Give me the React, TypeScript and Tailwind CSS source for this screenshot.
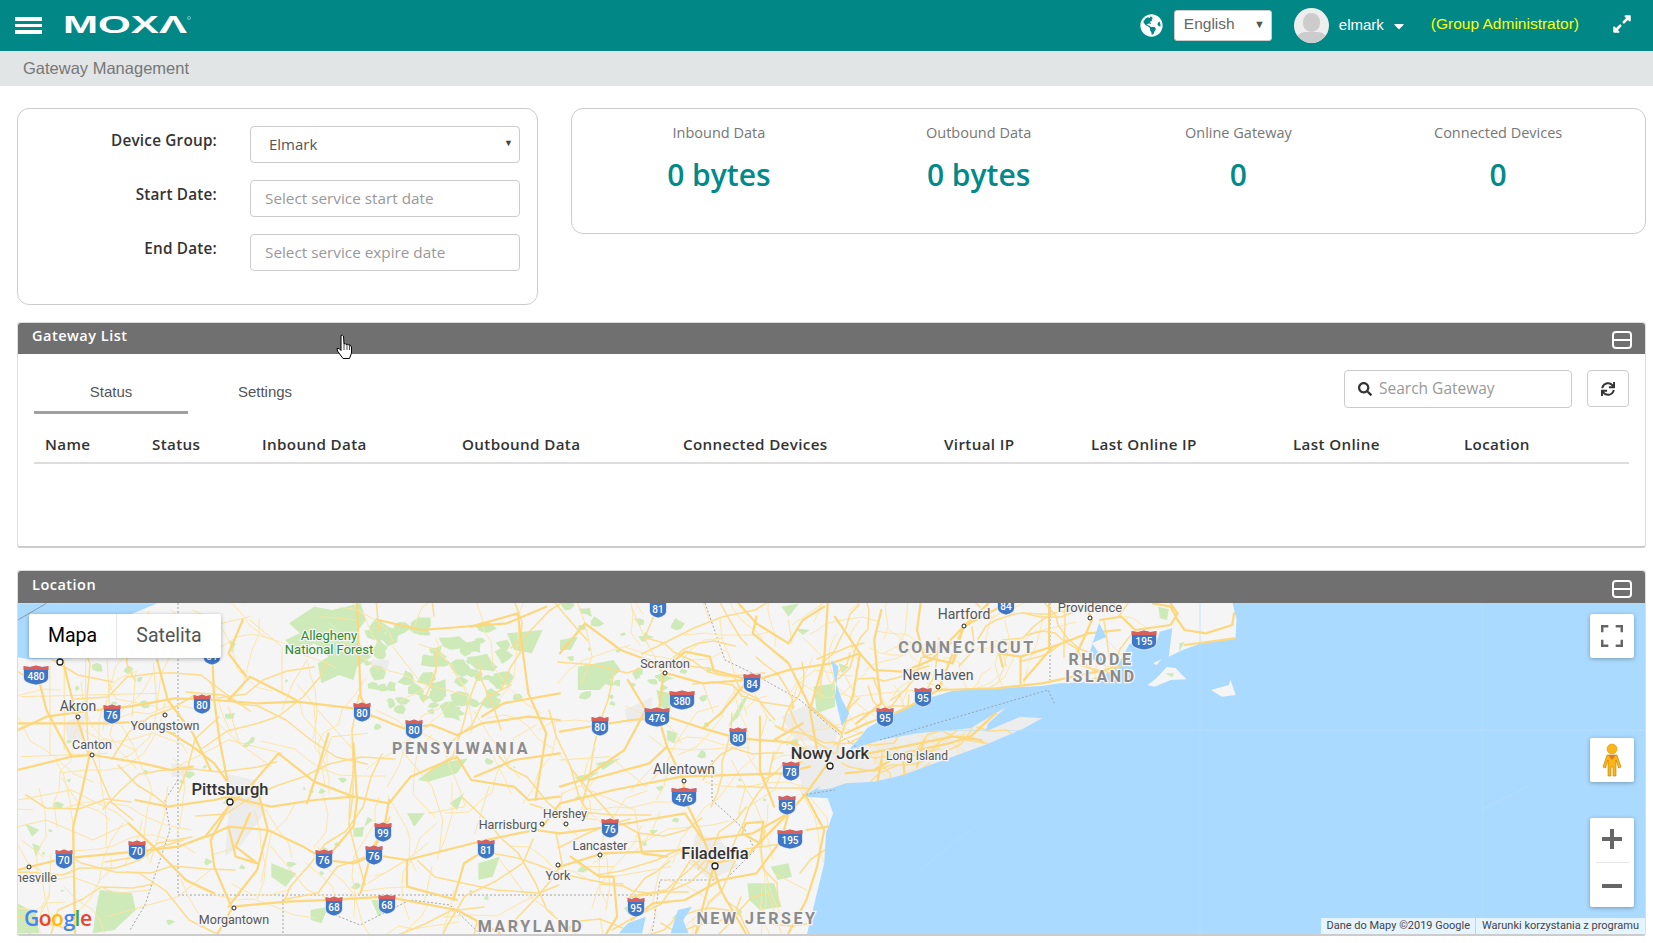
import React from 'react';
import { FaGlobeAmericas, FaExpandAlt, FaSearch, FaSync, FaCaretDown } from 'react-icons/fa';

const OPEN = "font-['Open_Sans',sans-serif]";
const ARIAL = "font-['Liberation_Sans',Arial,sans-serif]";

// --- Map data: road traces, per map region ---
const ROADS_WEST_MAIN = [
  'M50 390 L130 350 L230 335 L360 320 L490 295 L600 300 L720 310 L830 305 L990 325 L1050 350 L1130 385 L1210 375 L1280 405 L1350 370 L1480 350 L1568 360',
  'M50 370 L300 370 L400 365 L480 400 L540 440 L600 490 L640 550',
  'M50 810 L180 775 L380 755 L500 740 L575 710 L640 620 L700 560 L780 460 L880 545 L990 590 L1090 610 L1150 530 L1280 470 L1320 540 L1440 560 L1480 600 L1568 590',
  'M580 710 L640 680 L750 690 L850 740 L910 780 L990 790 L1050 765 L1140 780 L1250 750 L1360 720 L1500 690 L1568 700',
  'M595 170 L600 300 L615 420 L640 560 L645 610 L590 720 L600 800 L650 925 L610 1000',
  'M650 920 L800 905 L930 900 L1080 890 L1280 930 L1400 1000',
  'M1090 600 L1075 690 L1040 760 L1010 880',
  'M1270 900 L1300 790 L1360 750',
  'M210 1000 L205 680 L230 570 L250 470 L215 350 L180 200',
  'M50 510 L200 470 L260 465 L400 490 L480 510 L540 500',
  'M100 200 L130 330 L200 470',
  'M440 180 L470 300 L540 400 L590 510',
  'M380 600 L470 620 L600 600 L640 590 L760 620 L880 600 L990 590',
  'M360 670 L430 740 L520 840 L600 880',
  'M720 560 L750 690 L720 810 L640 920',
  'M990 430 L1000 600 L990 680 L910 780',
  'M920 400 L880 545 L860 610',
  'M1000 10 L1010 290 L1040 350',
  'M1320 80 L1450 40 L1480 280 L1530 400 L1500 600',
  'M1060 60 L1180 90 L1420 70 L1530 20',
  'M1350 350 L1410 310 L1568 280',
  'M1568 460 L1440 480 L1330 530',
  'M1140 780 L1140 860 L1280 900',
  'M640 300 L700 230 L830 300',
  'M690 230 L640 160 L680 60',
  'M700 640 L660 740 L720 790 L660 770 L640 680',
  'M1568 610 L1520 680',
];
const ROADS_WEST_THIN = [
  'M60 470 L300 460 M60 290 L440 280 M140 200 L140 470 M180 180 L180 450 M240 180 L240 360 M300 180 L310 370 M380 220 L370 350 M430 190 L440 330',
  'M50 600 L200 570 L330 640 L360 670 L260 720 L130 660 L50 680',
  'M480 510 L640 420 L790 460 M640 320 L670 430 L760 500 M670 430 L600 360',
  'M790 330 L820 250 L860 180 M890 330 L990 450 M1030 400 L930 410 L890 520',
  'M1100 420 L1210 560 L1240 660 L1230 760 M1200 640 L1300 620 M1370 560 L1330 700',
  'M760 740 L860 870 L910 890 M600 800 L500 890 L300 950 M100 850 L200 830 L330 880 L420 870',
  'M1030 850 L1140 780 M1210 800 L1190 900 M1400 780 L1470 880 L1550 940',
  'M700 60 L790 140 L790 280 M540 30 L620 70 L700 50 M1000 60 L900 50 M1100 140 L1180 250 L1320 290',
  'M60 720 L120 770 M420 790 L460 650 L470 560',
];
const ROADS_EAST_MAIN = [
  'M0 395 L110 375 L200 360 L300 350 L400 385 L500 415 L620 425 L660 430 L720 470',
  'M400 385 L450 340 L520 250 L640 210 L760 190 L840 160 L880 210 L960 215 L1040 180 L1130 80 L1200 40 L1250 10',
  'M290 220 L275 350 L300 440 L345 540 L350 600 L395 700 L430 790',
  'M0 610 L150 570 L340 530 L620 520 L700 500',
  'M0 700 L140 680 L240 660 L350 640 L400 720 L540 700 L640 640',
  'M0 800 L120 760 L350 750 L430 790 L520 770 L640 640 L690 580 L750 490',
  'M800 400 L860 370 L960 330 L1060 270 L1220 265 L1350 250 L1568 200',
  'M800 520 L880 510 L960 460 L1090 430 L1150 410 L1220 340',
  'M820 470 L960 440 L1100 410 L1180 420',
  'M690 590 L740 690 L720 800 L690 900 L640 1000',
  'M640 640 L620 720 L550 820 L450 840 L350 900 L260 910 L200 960',
  'M430 800 L450 870 L520 1000 M430 800 L380 1000',
  'M750 10 L740 180 L700 330 L720 450 M790 360 L820 290 L840 160 L770 50',
  'M550 50 L540 100 L640 190 L700 320 L790 400 M500 10 L550 70 L640 130 L680 60 L740 20',
  'M1010 10 L1000 90 L1020 170 L1100 190 L1130 80 M900 30 L880 120 L890 230 L900 310 L830 370',
  'M1380 140 L1300 240 M1568 90 L1480 100 L1380 140 L1290 170 L1230 160 L1240 200',
  'M0 160 L70 70 L170 150 L220 170 L300 200 L350 155 L420 170 L430 210 L530 240',
  'M190 240 L240 330 L180 450 L60 540 L0 560 M300 220 L400 250 L520 240 M300 440 L250 490 L80 540',
  'M220 700 L230 760 L300 770 M30 770 L110 830 L150 830 L160 950 L130 1000',
  'M560 350 L560 510 L600 620 M600 420 L680 370 M900 480 L890 540 M960 460 L965 525 M1020 420 L1000 500',
  'M520 670 L570 665 L560 730 L510 700 Z M690 690 L750 680',
  'M1200 10 L1130 80 L1060 270 M1470 10 L1490 60 L1440 180',
  'M1290 170 L1290 250 M1370 10 L1370 140',
];
const ROADS_EAST_THIN = [
  'M50 10 L70 70 L90 170 L60 250 M200 20 L240 120 L290 220 M0 480 L140 470 L240 560 L290 500',
  'M60 560 L210 630 L220 700 M400 250 L430 340 M540 270 L580 350 L560 420 M620 520 L600 570 L500 640',
  'M30 770 L60 800 L150 800 M150 830 L310 800 M600 820 L690 870 M450 880 L350 980 M580 870 L620 1000',
  'M640 60 L650 130 M800 230 L830 290 M950 120 L1000 130 M1120 150 L1100 190 M1240 150 L1250 200',
  'M0 640 L100 660 M200 570 L260 500 M480 480 L520 560 L500 640',
];
const LAND = 'M-1568 0 L1882 0 L1895 60 L1892 115 L1808 125 L1744 150 L1705 170 L1715 85 L1680 95 L1670 130 L1635 150 L1596 130 L1560 200 L1500 245 L1400 250 L1350 258 L1220 265 L1100 272 L1040 292 L950 330 L860 385 L830 425 L790 470 L760 520 L700 565 L680 590 L750 595 L765 640 L745 700 L740 790 L715 900 L690 1010 L-1568 1010 Z';
const LONG_ISLAND = 'M810 450 L900 420 L1000 400 L1150 385 L1220 340 L1250 322 L1200 370 L1190 395 L1290 350 L1350 355 L1300 385 L1190 435 L1100 470 L960 525 L880 545 L800 550 L760 565 L720 570 L770 510 Z';

const FOREST_WEST = [
  'M880 20 L930 30 L1010 10 L1025 60 L990 110 L1040 170 L1000 200 L990 240 L950 225 L900 250 L890 190 L920 170 L880 130 L830 160 L800 120 L840 100 L810 70 Z',
  'M1170 540 L1230 490 L1310 475 L1280 520 L1200 545 Z',
  'M1420 100 L1520 90 L1490 160 L1440 150 Z',
  'M280 870 L370 880 L380 930 L320 990 L260 1000 L270 920 Z',
  'M760 790 L830 820 L800 860 L760 830 Z M90 730 L115 740 L100 770 Z M70 670 L110 690 L90 710 Z',
  'M990 685 L1020 680 L1015 710 L990 710 Z M1030 650 L1045 660 L1020 680 Z M1260 610 L1300 580 L1280 630 Z',
  'M50 910 L100 940 L110 1000 L50 1000 Z M870 930 L920 920 L900 970 L870 960 Z M1040 900 L1100 900 L1060 950 Z',
  'M1340 790 L1400 770 L1380 830 L1340 840 Z M1140 640 L1190 640 L1160 680 Z M640 120 L660 130 L650 160 Z',
];
const FOREST_EAST = [
  'M0 120 L50 110 L30 150 L0 150 Z M50 200 L150 180 L170 210 L110 270 L50 270 Z',
  'M270 270 L310 280 L310 330 L280 320 Z M300 390 L330 400 L320 430 L300 420 Z',
  'M710 260 L770 250 L770 320 L720 340 Z M660 85 L700 90 L680 105 Z M620 20 L670 10 L640 50 Z',
  'M525 850 L600 850 L620 920 L560 930 L530 900 Z M590 800 L640 790 L650 830 L610 840 Z',
  'M250 690 L275 690 L260 705 Z M780 190 L810 200 L790 220 Z M510 300 L530 280 L500 350 L470 380 Z',
  'M100 490 L170 475 L120 510 Z M40 530 L110 515 L60 550 Z',
];
const URBAN_EAST = [
  'M620 350 L700 310 L780 380 L770 430 L660 420 Z',
  'M380 700 L450 720 L500 800 L420 840 L360 790 Z',
  'M660 440 L800 430 L790 520 L680 590 Z',
  'M180 330 L260 290 L250 360 L190 370 Z',
];
const URBAN_WEST = [
  'M630 520 L710 540 L740 640 L680 730 L630 770 L640 640 Z',
  'M180 370 L240 340 L230 420 L190 420 Z M480 490 L540 500 L530 530 L480 530 Z M1040 180 L1090 180 L1085 210 L1040 215 Z',
];

// small seeded generator so the fine road mesh and the forest speckle stay put between renders
function seeded(seed: number) {
  let a = seed;
  return () => {
    a = (a + 0x6d2b79f5) | 0;
    let t = Math.imul(a ^ (a >>> 15), 1 | a);
    t = (t + Math.imul(t ^ (t >>> 7), 61 | t)) ^ t;
    return ((t ^ (t >>> 14)) >>> 0) / 4294967296;
  };
}

function walks(seed: number, count: number, box: [number, number, number, number], step: number) {
  const r = seeded(seed);
  const out: string[] = [];
  for (let i = 0; i < count; i++) {
    let x = box[0] + r() * (box[2] - box[0]);
    let y = box[1] + r() * (box[3] - box[1]);
    let dir = r() * Math.PI * 2;
    let d = `M${x.toFixed(0)} ${y.toFixed(0)}`;
    const n = 3 + Math.floor(r() * 5);
    for (let j = 0; j < n; j++) {
      dir += (r() - 0.5) * 1.1;
      x += Math.cos(dir) * step * (0.6 + r());
      y += Math.sin(dir) * step * (0.6 + r());
      d += ` L${x.toFixed(0)} ${y.toFixed(0)}`;
    }
    out.push(d);
  }
  return out;
}

function blobs(seed: number, count: number, box: [number, number, number, number], rMin: number, rMax: number) {
  const r = seeded(seed);
  const out: string[] = [];
  for (let i = 0; i < count; i++) {
    const cx = box[0] + r() * (box[2] - box[0]);
    const cy = box[1] + r() * (box[3] - box[1]);
    const rad = rMin + r() * (rMax - rMin);
    let d = '';
    for (let k = 0; k < 7; k++) {
      const a = (k / 7) * Math.PI * 2;
      const q = rad * (0.45 + r() * 0.8);
      d += `${k ? 'L' : 'M'}${(cx + Math.cos(a) * q).toFixed(1)} ${(cy + Math.sin(a) * q * 0.8).toFixed(1)} `;
    }
    out.push(d + 'Z');
  }
  return out;
}

const MESH_THIN = [
  ...walks(11, 150, [18, 603, 1000, 934], 17),
  ...walks(12, 45, [760, 610, 1170, 760], 9),
];
const MESH_MID = [
  ...walks(21, 55, [18, 615, 800, 934], 24),
  ...walks(22, 34, [730, 640, 960, 800], 14),
  ...walks(23, 14, [960, 603, 1175, 665], 14),
  ...walks(24, 10, [860, 725, 1020, 775], 12),
  ...walks(25, 10, [650, 820, 800, 934], 18),
];
const SPECKLE = [
  ...blobs(31, 60, [375, 625, 505, 715], 4, 13),
  ...blobs(32, 80, [18, 640, 800, 934], 1.5, 6),
  ...blobs(33, 24, [560, 603, 700, 700], 2, 8),
];

type Label = { t: string; x: number; y: number; s?: number; c?: string; w?: number; ls?: number };
const LABELS: Label[] = [
  { t: 'Akron', x: 78, y: 711, s: 14 },
  { t: 'Youngstown', x: 165, y: 730, s: 12.5 },
  { t: 'Canton', x: 92, y: 749, s: 12.5 },
  { t: 'Pittsburgh', x: 230, y: 795, s: 16.5, c: '#333', w: 500 },
  { t: 'Allegheny', x: 329, y: 640, s: 13, c: '#2b8a2b' },
  { t: 'National Forest', x: 329, y: 654, s: 13, c: '#2b8a2b' },
  { t: 'Morgantown', x: 234, y: 924, s: 12.5 },
  { t: 'nesville', x: 36, y: 882, s: 12.5 },
  { t: 'Harrisburg', x: 508, y: 829, s: 12.5 },
  { t: 'PENSYLWANIA', x: 461, y: 754, s: 16, c: '#8b8b8b', w: 700, ls: 2.6 },
  { t: 'MARYLAND', x: 531, y: 932, s: 16, c: '#8b8b8b', w: 700, ls: 2.6 },
  { t: 'Scranton', x: 665, y: 668, s: 12.5 },
  { t: 'Hartford', x: 964, y: 619, s: 14 },
  { t: 'CONNECTICUT', x: 967, y: 653, s: 16, c: '#8b8b8b', w: 700, ls: 2.6 },
  { t: 'New Haven', x: 938, y: 680, s: 14 },
  { t: 'Providence', x: 1090, y: 612, s: 13 },
  { t: 'RHODE', x: 1101, y: 665, s: 16, c: '#8b8b8b', w: 700, ls: 2.6 },
  { t: 'ISLAND', x: 1101, y: 682, s: 16, c: '#8b8b8b', w: 700, ls: 2.6 },
  { t: 'Long Island', x: 917, y: 760, s: 12 },
  { t: 'Nowy Jork', x: 830, y: 759, s: 16.5, c: '#333', w: 500 },
  { t: 'Allentown', x: 684, y: 774, s: 14 },
  { t: 'Hershey', x: 565, y: 818, s: 12 },
  { t: 'Lancaster', x: 600, y: 850, s: 12.5 },
  { t: 'York', x: 558, y: 880, s: 12.5 },
  { t: 'Filadelfia', x: 715, y: 859, s: 16.5, c: '#333', w: 500 },
  { t: 'NEW JERSEY', x: 757, y: 924, s: 16, c: '#8b8b8b', w: 700, ls: 2.6 },
];
// [x, y, large]
const DOTS: [number, number, boolean][] = [
  [60, 662, true], [78, 717, false], [165, 715, false], [92, 755, false], [230, 802, true], [234, 908, false],
  [29, 867, false], [542, 824, false], [665, 673, false], [964, 626, false], [938, 687, false], [1090, 618, false],
  [830, 766, true], [684, 781, false], [600, 855, false], [715, 866, true], [566, 824, false], [558, 865, false],
];
// [x, y, number]
const SHIELDS: [number, number, string][] = [
  [36, 675, '480'], [112, 714, '76'], [202, 704, '80'], [362, 712, '80'], [414, 729, '80'], [64, 859, '70'], [137, 850, '70'],
  [324, 859, '76'], [374, 855, '76'], [383, 832, '99'], [486, 849, '81'], [334, 906, '68'], [387, 904, '68'], [212, 655, '81'],
  [658, 608, '81'], [1006, 605, '84'], [752, 683, '84'], [682, 700, '380'], [657, 717, '476'], [600, 726, '80'], [738, 737, '80'],
  [923, 697, '95'], [885, 717, '95'], [791, 771, '78'], [684, 797, '476'], [787, 805, '95'], [610, 828, '76'], [790, 839, '195'],
  [636, 907, '95'], [1144, 640, '195'],
];

function Shield({ x, y, n }: { x: number; y: number; n: string }) {
  const w = n.length > 2 ? 12.5 : 8.5;
  return (
    <g transform={`translate(${x} ${y})`}>
      <path d={`M${-w} -9 L${-w * 0.5} -8 L0 -9.5 L${w * 0.5} -8 L${w} -9 L${w} 3 Q${w} 8 0 10 Q${-w} 8 ${-w} 3 Z`} fill="#3f76c6" stroke="#fff" strokeWidth="0.6" />
      <path d={`M${-w} -9 L${-w * 0.5} -8 L0 -9.5 L${w * 0.5} -8 L${w} -9 L${w} -5 L${-w} -5 Z`} fill="#d9605a" />
      <text x="0" y="4.5" textAnchor="middle" fontSize="10" fontWeight="500" fill="#fff" fontFamily="Roboto, sans-serif">{n}</text>
    </g>
  );
}

function MapDrawing() {
  return (
    <svg className="block w-full h-full" viewBox="18 603 1627 331" preserveAspectRatio="none">
      <defs>
        <clipPath id="land-clip">
          <path transform="translate(560 600) scale(.357 .3333)" d={LAND} />
          <path transform="translate(560 600) scale(.357 .3333)" d={LONG_ISLAND} />
        </clipPath>
      </defs>
      <rect x="18" y="603" width="1627" height="331" fill="#aadaff" />
      <g transform="translate(560 600) scale(.357 .3333)">
        <path d={LAND} fill="#f5f5f5" />
        <path d={LONG_ISLAND} fill="#ededed" />
        {URBAN_EAST.map((d) => <path key={d} d={d} fill="#ececec" />)}
        {FOREST_EAST.map((d) => <path key={d} d={d} fill="#cdeab8" />)}
      </g>
      <g transform="translate(1100 600) scale(.3527 .3333)">
        <path d="M135 255 L160 235 L190 200 L215 205 L245 238 L200 240 L155 260 Z M315 270 L365 255 L370 240 L385 285 L345 290 Z" fill="#f5f5f5" />
        <path d="M150 190 L175 178 L160 195 Z" fill="#f5f5f5" />
        <path d="M165 20 L195 28 L190 60 L170 55 Z M225 130 L240 125 L225 155 Z M185 220 L210 220 L205 232 Z" fill="#cdeab8" />
      </g>
      <g transform="translate(0 600) scale(.357 .3333)">
        {URBAN_WEST.map((d) => <path key={d} d={d} fill="#ececec" />)}
        {FOREST_WEST.map((d) => <path key={d} d={d} fill="#cdeab8" />)}
      </g>
      <g fill="#cdeab8">
        {SPECKLE.map((d) => <path key={d} d={d} />)}
      </g>
      {/* tile seams on the water */}
      <path d="M920 730.5 H1645 M1200 603 V934 M1482 603 V934 M1482 810 L1530 785 M920 870 L970 830" stroke="#b8e0ff" strokeWidth="0.7" fill="none" />

      {/* borders */}
      <g fill="none" stroke="#9a9a9a" strokeWidth="0.9" strokeDasharray="2 2">
        <path d="M178 603 V895 H655 M283 895 V934 M1050 603 V680 M880 740 L1048 690 L1055 705 M802 795 L835 790" />
        <path d="M705 603 L725 660 L750 672 L800 700 L840 735 L860 750 M712 760 L712 800 L745 830 L755 850 L725 880 L660 880 L652 934 M178 780 L165 800 L170 830 L145 905 L130 930" />
        <path d="M335 915 L360 925 L410 900 L450 905 L480 934" />
      </g>

      {/* roads */}
      <g fill="none" strokeLinejoin="round" strokeLinecap="round">
        <g clipPath="url(#land-clip)">
          <g stroke="#fde6a8" strokeWidth="1">
            {MESH_THIN.map((d) => <path key={d} d={d} />)}
          </g>
          <g stroke="#fddc8c" strokeWidth="1.5">
            {MESH_MID.map((d) => <path key={d} d={d} />)}
          </g>
        </g>
        <g transform="translate(0 600) scale(.357 .3333)" stroke="#fde3a0">
          {ROADS_WEST_THIN.map((d) => <path key={d} d={d} strokeWidth="1" vectorEffect="non-scaling-stroke" />)}
        </g>
        <g transform="translate(560 600) scale(.357 .3333)" stroke="#fde3a0">
          {ROADS_EAST_THIN.map((d) => <path key={d} d={d} strokeWidth="1" vectorEffect="non-scaling-stroke" />)}
        </g>
        <g transform="translate(0 600) scale(.357 .3333)" stroke="#fdd77c">
          {ROADS_WEST_MAIN.map((d) => <path key={d} d={d} strokeWidth="2.2" vectorEffect="non-scaling-stroke" />)}
        </g>
        <g transform="translate(560 600) scale(.357 .3333)" stroke="#fdd77c">
          {ROADS_EAST_MAIN.map((d) => <path key={d} d={d} strokeWidth="2.2" vectorEffect="non-scaling-stroke" />)}
        </g>
        <g transform="translate(1100 600) scale(.3527 .3333)" stroke="#fdd77c">
          <path d="M0 60 L60 50 L100 90 L200 75 L220 40 L200 10 M150 10 L200 20 L220 60 L240 90 L300 100 L375 75 L380 40 M240 135 L380 115" strokeWidth="2.2" vectorEffect="non-scaling-stroke" />
        </g>
      </g>

      {/* water over the road mesh: lake and bays */}
      <g transform="translate(0 600) scale(.357 .3333)">
        <path d="M50 10 L440 10 L330 60 L250 120 L200 175 L80 178 L50 172 Z" fill="#aadaff" />
        <path d="M50 60 L130 10" stroke="#8f9aa6" strokeWidth="1" fill="none" vectorEffect="non-scaling-stroke" />
      </g>
      <g transform="translate(560 600) scale(.357 .3333)">
        <path d="M310 1000 L330 930 L370 920 L345 960 L360 1000 Z M165 1000 L190 970 L240 950 L230 1000 Z" fill="#aadaff" />
        <path d="M1510 70 L1530 110 L1490 130 L1510 160 L1530 200 L1480 170 Z M780 200 L760 180 L770 240 L790 300 L810 340 L790 380 L770 290 Z" fill="#aadaff" />
      </g>

      {SHIELDS.map(([x, y, n]) => <Shield key={`${x}-${y}`} x={x} y={y} n={n} />)}
      {DOTS.map(([x, y, big]) => (
        <circle key={`${x}-${y}`} cx={x} cy={y} r={big ? 3 : 2} fill="#fff" stroke="#222" strokeWidth={big ? 1.3 : 1} />
      ))}
      <g fontFamily="Roboto, sans-serif" textAnchor="middle">
        {LABELS.map((l) => (
          <text key={l.t} x={l.x} y={l.y} fontSize={l.s} fontWeight={l.w ?? 400} fill={l.c ?? '#555'} letterSpacing={l.ls ?? 0} stroke="#f5f5f5" strokeWidth="2.5" paintOrder="stroke">{l.t}</text>
        ))}
      </g>
    </svg>
  );
}

function MinusBox() {
  return (
    <div className="w-[20px] h-[18px] border-2 border-white rounded-[4px] flex items-center">
      <div className="w-full h-[2px] bg-white" />
    </div>
  );
}

function PanelHeader({ title, compact }: { title: string; compact?: boolean }) {
  return (
    <div className={`flex justify-between bg-[#707070] rounded-t-[3px] pl-[14px] pr-[13px] ${compact ? 'h-[31px]' : 'h-[33px]'}`}>
      <span className={`${OPEN} text-[14.5px] font-semibold text-white tracking-[0.5px] ${compact ? 'leading-[25px]' : 'leading-[27px]'}`}>{title}</span>
      <div className={compact ? 'pt-[8px]' : 'pt-[9px]'}><MinusBox /></div>
    </div>
  );
}

function MapButton({ className, children }: { className: string; children: React.ReactNode }) {
  return (
    <div className={`absolute right-[11px] w-[44px] bg-white rounded-[2px] shadow-[0_1px_4px_rgba(0,0,0,0.3)] flex items-center ${className}`}>
      {children}
    </div>
  );
}

const FORM_ROWS = [
  { label: 'Device Group:', value: 'Elmark' },
  { label: 'Start Date:', placeholder: 'Select service start date' },
  { label: 'End Date:', placeholder: 'Select service expire date' },
];
const STATS = [
  { label: 'Inbound Data', value: '0 bytes' },
  { label: 'Outbound Data', value: '0 bytes' },
  { label: 'Online Gateway', value: '0' },
  { label: 'Connected Devices', value: '0' },
];
const COLUMNS = ['Name', 'Status', 'Inbound Data', 'Outbound Data', 'Connected Devices', 'Virtual IP', 'Last Online IP', 'Last Online', 'Location'];

export default function App() {
  return (
    <div className="relative w-full h-[943px] overflow-hidden bg-white">
      {/* Top bar */}
      <header className="flex items-center h-[51px] bg-[#028787]">
        <div className="flex flex-col gap-[3px] ml-[15px] w-[27px]">
          <div className="h-[3.5px] bg-white" />
          <div className="h-[3.5px] bg-white" />
          <div className="h-[3.5px] bg-white" />
        </div>
        <svg className="ml-[21px] mb-[2px]" width="128" height="24" viewBox="0 0 128 24">
          <text x="0" y="20" fontFamily="Liberation Sans, sans-serif" fontWeight="700" fontSize="23" fill="#fff" textLength="124" lengthAdjust="spacingAndGlyphs">MOXΛ</text>
          <circle cx="126" cy="5" r="1.5" fill="none" stroke="#cfe" strokeWidth="0.5" />
        </svg>
        <div className="ml-auto flex items-center">
          <FaGlobeAmericas className="text-white text-[23px]" />
          <div className={`${ARIAL} relative ml-[11px] w-[98px] h-[31px] bg-white rounded-[3px] border border-[#ccc] pl-[9px] text-[15.5px] leading-[26px] text-[#666]`}>
            English
            <span className="absolute right-[6px] top-0 text-[11px] text-[#555]">▼</span>
          </div>
          <div className="ml-[22px] w-[35px] h-[35px] rounded-full bg-[#eee] overflow-hidden relative">
            <div className="absolute left-[9px] top-[5px] w-[17px] h-[19px] rounded-full bg-[#ccc]" />
            <div className="absolute left-[1px] top-[24px] w-[33px] h-[20px] rounded-full bg-[#ccc]" />
          </div>
          <span className={`${ARIAL} ml-[10px] text-[15px] text-white`}>elmark</span>
          <FaCaretDown className="ml-[7px] text-white text-[16px]" />
          <span className={`${ARIAL} ml-[24px] mb-[4px] text-[15.5px] text-[#ffff00]`}>(Group Administrator)</span>
          <FaExpandAlt className="ml-[33px] mr-[21px] mb-[4px] text-white text-[20px]" />
        </div>
      </header>

      {/* Breadcrumb */}
      <div className={`${ARIAL} h-[35px] bg-[#e1e5e6] pl-[23px] text-[16.5px] leading-[34px] text-[#777]`}>Gateway Management</div>

      <main className="pl-[17px] pr-[7px] pt-[22px]">
        <div className="flex items-start">
          {/* Filter card */}
          <div className="w-[521px] h-[197px] border border-[#ccc] rounded-[12px] pt-[17px] pr-[17px] shrink-0">
            {FORM_ROWS.map((r) => (
              <div key={r.label} className="flex mb-[17px] last:mb-0">
                <label className={`${OPEN} w-[199px] text-right text-[15.3px] font-semibold text-[#333] leading-[28px] tracking-[0.2px]`}>{r.label}</label>
                <div className="ml-[33px] flex-1">
                  {r.value ? (
                    <div className={`${OPEN} relative h-[37px] border border-[#ccc] rounded-[4px] pl-[18px] text-[15px] leading-[35px] text-[#555]`}>
                      {r.value}
                      <span className="absolute right-[6px] top-[-2px] text-[9px] text-[#444]">▼</span>
                    </div>
                  ) : (
                    <input
                      readOnly
                      placeholder={r.placeholder}
                      className={`${OPEN} block w-full h-[37px] border border-[#ccc] rounded-[4px] px-[14px] pb-[1px] text-[15.3px] placeholder:text-[#999] outline-none`}
                    />
                  )}
                </div>
              </div>
            ))}
          </div>

          {/* Stats card */}
          <div className="flex-1 ml-[33px] h-[126px] border border-[#ccc] rounded-[12px] px-[17px] pt-[14px] grid grid-cols-4">
            {STATS.map((s) => (
              <div key={s.label} className={`${OPEN} flex flex-col items-center`}>
                <span className="text-[14.5px] leading-[20px] text-[#777]">{s.label}</span>
                <span className="mt-[10px] text-[30px] leading-[44px] font-semibold text-[#028a8a]">{s.value}</span>
              </div>
            ))}
          </div>
        </div>

        {/* Gateway list */}
        <section className="mt-[17px] h-[226px] border border-[#ddd] border-b-[2px] border-b-[#ccc] rounded-[3px]">
          <PanelHeader title="Gateway List" compact />
          <div className="px-[16px]">
            <div className="flex items-start pt-[16px] h-[73px]">
              <div className={`${ARIAL} w-[154px] h-[44px] border-b-[3px] border-[#a0a0a0] text-center text-[15px] leading-[44px] text-[#555]`}>Status</div>
              <div className={`${ARIAL} w-[154px] text-center text-[15px] leading-[44px] text-[#555]`}>Settings</div>
              <div className="ml-auto flex items-start">
                <div className={`${OPEN} w-[228px] h-[38px] border border-[#ccc] rounded-[4px] flex items-center pl-[13px] text-[15.5px] text-[#999]`}>
                  <FaSearch className="text-[#333] text-[14px] mr-[7px]" />
                  Search Gateway
                </div>
                <div className="ml-[15px] w-[42px] h-[37px] border border-[#ccc] rounded-[4px] flex items-center justify-center">
                  <FaSync className="text-[#333] text-[14px]" />
                </div>
              </div>
            </div>
            <div className={`${OPEN} mt-[1px] grid grid-cols-[107px_110px_200px_221px_261px_147px_202px_171px_1fr] h-[36px] border-b-2 border-[#ddd]`}>
              {COLUMNS.map((c) => (
                <span key={c} className="pl-[11px] pt-[3px] text-[15.2px] font-semibold text-[#333] leading-[26px] tracking-[0.35px]">{c}</span>
              ))}
            </div>
          </div>
        </section>

        {/* Location */}
        <section className="mt-[22px] h-[366px] border border-[#ddd] border-b-[2px] border-b-[#ccc] rounded-[3px]">
          <PanelHeader title="Location" />
          <div className="relative h-[331px] -mt-px">
            <MapDrawing />

            <div className="absolute left-[11px] top-[11px] w-[192px] h-[44px] flex bg-white rounded-[2px] shadow-[0_1px_4px_rgba(0,0,0,0.3)] font-['Roboto',sans-serif] text-[19.5px] leading-[44px]">
              <span className="w-[88px] text-center text-black border-r border-[#e6e6e6]">Mapa</span>
              <span className="flex-1 text-center text-[#565656]">Satelita</span>
            </div>

            <MapButton className="top-[11px] h-[44px] justify-center">
              <svg width="22" height="22" viewBox="0 0 18 18" fill="none" stroke="#666" strokeWidth="2">
                <path d="M1 6 V1 H6 M12 1 H17 V6 M17 12 V17 H12 M6 17 H1 V12" />
              </svg>
            </MapButton>
            <MapButton className="top-[135px] h-[44px] justify-center">
              <svg width="20" height="34" viewBox="0 0 20 34">
                <circle cx="10" cy="6" r="5" fill="#fdb515" stroke="#c98a10" strokeWidth="0.5" />
                <path d="M5 12 H15 L19 24 L16.5 25 L14 17 V33 H11 V24 H9 V33 H6 V17 L3.500 25 L1 24 Z" fill="#fdb515" stroke="#b57f14" strokeWidth="0.6" />
                <path d="M6 12 H14 L10 17 Z" fill="#e07b20" />
              </svg>
            </MapButton>
            <MapButton className="top-[215px] h-[89px] flex-col justify-start pt-[11px]">
              <svg width="20" height="20" viewBox="0 0 20 20"><path d="M8 0 H12 V8 H20 V12 H12 V20 H8 V12 H0 V8 H8 Z" fill="#666" /></svg>
              <div className="absolute top-[44px] left-[6px] right-[5px] h-px bg-[#e6e6e6]" />
              <svg width="20" height="4" viewBox="0 0 20 4" className="mt-[35px]"><rect width="20" height="4" fill="#666" /></svg>
            </MapButton>

            <div className={`${OPEN} absolute left-[6px] bottom-[3px] text-[21px] leading-[26px] tracking-[-0.5px] font-semibold`}>
              <span className="text-[#4285f4]">G</span>
              <span className="text-[#ea4335]">o</span>
              <span className="text-[#fbbc05]">o</span>
              <span className="text-[#4285f4]">g</span>
              <span className="text-[#34a853]">l</span>
              <span className="text-[#ea4335]">e</span>
            </div>

            <div className="absolute right-0 bottom-0 flex gap-px h-[16px] font-['Roboto',sans-serif] text-[11px] leading-[16px] text-[#444]">
              <span className="bg-[#ffffff]/70 px-[5px]">Dane do Mapy ©2019 Google</span>
              <span className="bg-[#ffffff]/70 px-[6px]">Warunki korzystania z programu</span>
            </div>
          </div>
        </section>
      </main>

      {/* Mouse pointer in the capture */}
      <svg className="absolute left-[336px] top-[334px]" width="18" height="26" viewBox="0 0 18 26">
        <path d="M5 1.500 Q6.500 0.500 7.500 2 L8 10 L9 9.500 L10 10.500 L11.500 10 L12.500 11 L14 11 L15.500 13 L15.500 19 L13.500 24.500 L7 24.500 L1.500 17 L1 14.500 L3 14.500 L5 16.500 Z" fill="#fff" stroke="#000" strokeWidth="1" strokeLinejoin="round" />
        <path d="M8 10 V16 M11 10.500 V16 M13.500 11.500 V16" stroke="#000" strokeWidth="0.7" />
      </svg>
    </div>
  );
}
